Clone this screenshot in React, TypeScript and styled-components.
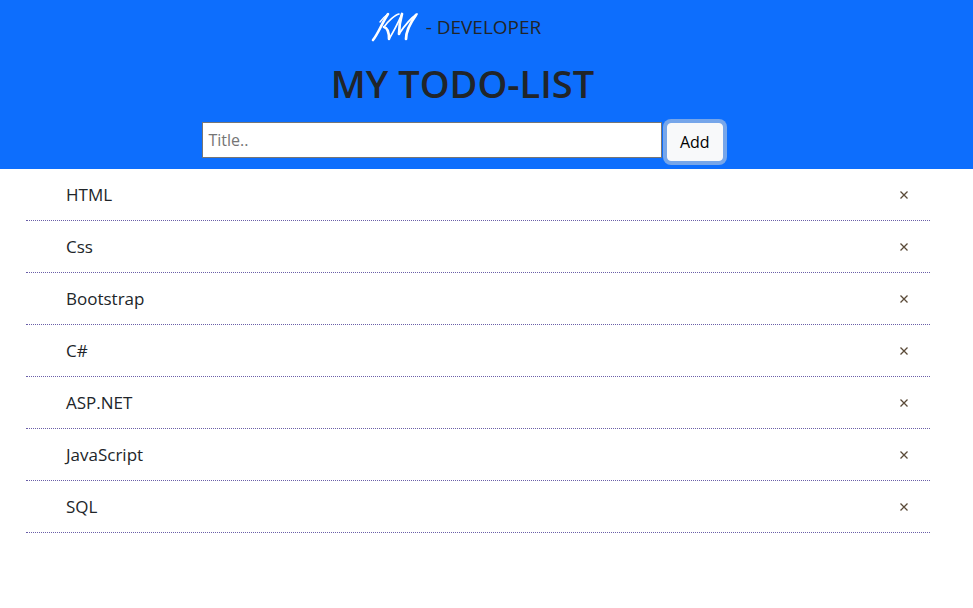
import React, { useState } from "react";
import styled, { createGlobalStyle } from "styled-components";

const GlobalStyle = createGlobalStyle`
  *, *::before, *::after { box-sizing: border-box; }
  body {
    margin: 0;
    background: #fff;
    color: #212529;
    font-family: "Segoe UI", "Open Sans", "Noto Sans", sans-serif;
    font-size: 16px;
    font-weight: 400;
    line-height: 24px;
  }
`;

const Header = styled.header`
  display: flex;
  flex-direction: column;
  align-items: center;
  padding: 8px 48px 4px 0;
  background: #0d6efd;
`;

const Brand = styled.div`
  display: flex;
  align-items: center;
  gap: 4px;
  height: 38px;
  padding-right: 14px;
  font-size: 19px;
`;

const Logo = styled.svg`
  width: 52px;
  height: 32px;
  fill: none;
  stroke: #fff;
  stroke-linecap: round;
  stroke-linejoin: round;
`;

const Heading = styled.h1`
  margin: 13px 0 15px;
  font-size: 38px;
  font-weight: 600;
  line-height: 48px;
`;

const AddForm = styled.form`
  display: flex;
  align-items: flex-start;
  justify-content: center;
  gap: 5px;
  width: 100%;
  height: 43px;
  padding: 0 3px;
`;

const TitleInput = styled.input`
  width: 50%;
  height: 36px;
  padding: 0 5px;
  border: 1px solid #767676;
  border-radius: 0;
  background: #fff;
  color: #212529;
  font: inherit;
  outline: none;
  &::placeholder { color: #757575; opacity: 1; }
`;

const AddButton = styled.button`
  height: 38px;
  margin-top: 1px;
  padding: 0 12px;
  border: 1px solid #f8f9fa;
  border-radius: 4px;
  background: #f8f9fa;
  box-shadow: 0 0 0 4px #76a6ea;
  color: #000;
  font: inherit;
  cursor: pointer;
`;

const List = styled.ul`
  margin: 0 43px 0 26px;
  padding: 0;
  list-style: none;
`;

const Item = styled.li`
  display: flex;
  align-items: center;
  justify-content: space-between;
  height: 52px;
  padding: 0 16px 0 40px;
  border-bottom: 1px dotted #6a5fa8;
  font-size: 17px;
`;

const RemoveButton = styled.button`
  display: flex;
  align-items: center;
  justify-content: center;
  width: 20px;
  height: 24px;
  padding: 0;
  border: 0;
  background: none;
  cursor: pointer;
`;

const Cross = styled.svg`
  width: 8px;
  height: 8px;
  fill: none;
  stroke: #5a4a38;
  stroke-width: 1.3;
`;

const initialItems = ["HTML", "Css", "Bootstrap", "C#", "ASP.NET", "JavaScript", "SQL"];

export default function App() {
  const [items, setItems] = useState(initialItems);
  const [title, setTitle] = useState("");

  const add = (event: React.FormEvent) => {
    event.preventDefault();
    if (!title.trim()) return;
    setItems([...items, title.trim()]);
    setTitle("");
  };

  return (
    <>
      <GlobalStyle />
      <Header>
        <Brand>
          <Logo viewBox="0 0 52 32" role="img" aria-label="KM">
            <path strokeWidth="2.6" d="M3 29 C8 23 12 12 18 3" />
            <path strokeWidth="1.4" d="M10 11 C13 7 15 5 18 3" />
            <path strokeWidth="1.6" d="M29 3 C25 4 18 10 14 16" />
            <path strokeWidth="2.6" d="M14 16 C18 17 19 24 19 28" />
            <path strokeWidth="1.8" d="M19 28 C24 20 28 12 32 3" />
            <path strokeWidth="2.7" d="M32 3 C30 10 29 18 29 23" />
            <path strokeWidth="1.8" d="M29 23 C35 14 41 7 47 3" />
            <path strokeWidth="2.7" d="M46 4 C41 11 36 21 36 28" />
          </Logo>
          <span>- DEVELOPER</span>
        </Brand>
        <Heading>MY TODO-LIST</Heading>
        <AddForm onSubmit={add}>
          <TitleInput
            aria-label="Title"
            placeholder="Title.."
            value={title}
            onChange={(event) => setTitle(event.target.value)}
          />
          <AddButton type="submit">Add</AddButton>
        </AddForm>
      </Header>
      <List>
        {items.map((item, index) => (
          <Item key={index}>
            <span>{item}</span>
            <RemoveButton
              type="button"
              aria-label={`Remove ${item}`}
              onClick={() => setItems(items.filter((_, i) => i !== index))}
            >
              <Cross viewBox="0 0 8 8">
                <path d="M0.5 0.5 L7.5 7.5 M7.5 0.5 L0.5 7.5" />
              </Cross>
            </RemoveButton>
          </Item>
        ))}
      </List>
    </>
  );
}
